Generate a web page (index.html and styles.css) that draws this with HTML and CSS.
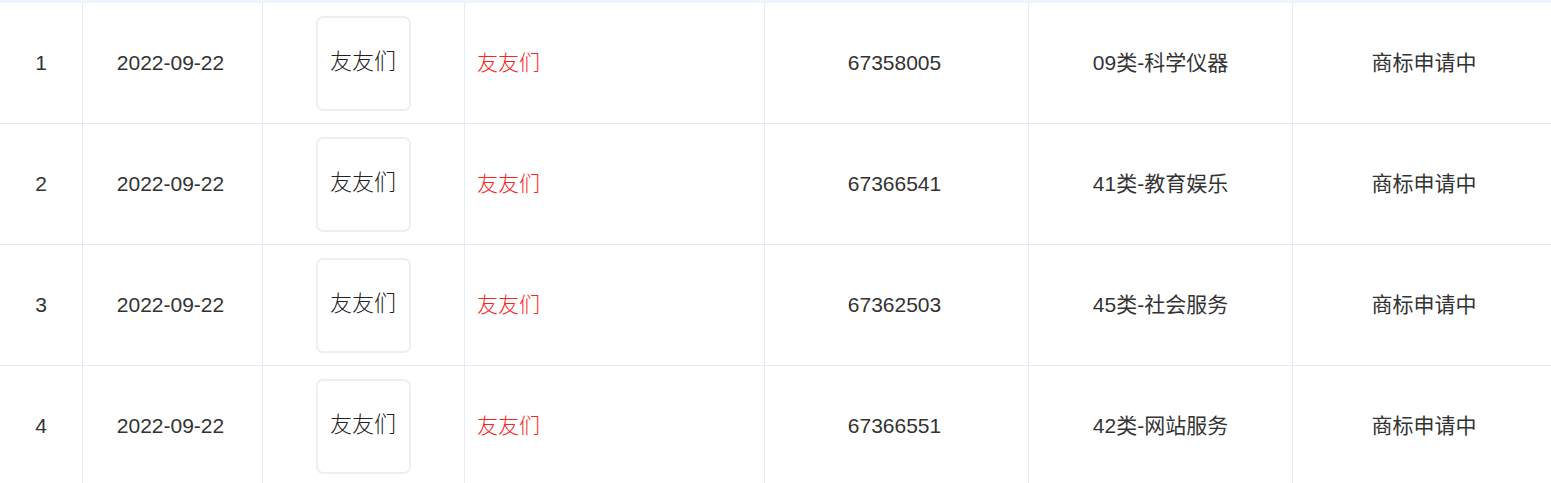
FILE: index.html
```html
<!DOCTYPE html>
<html lang="zh-CN">
<head>
<meta charset="utf-8">
<title>商标列表</title>
<link rel="stylesheet" href="styles.css">
</head>
<body>
<div class="table">
  <div class="row">
    <div class="cell">1</div>
    <div class="cell shift">2022-09-22</div>
    <div class="cell"><div class="logo">友友们</div></div>
    <div class="cell left cjk"><span class="name">友友们</span></div>
    <div class="cell shift">67358005</div>
    <div class="cell cjk">09类-科学仪器</div>
    <div class="cell last cjk">商标申请中</div>
  </div>
  <div class="row">
    <div class="cell">2</div>
    <div class="cell shift">2022-09-22</div>
    <div class="cell"><div class="logo">友友们</div></div>
    <div class="cell left cjk"><span class="name">友友们</span></div>
    <div class="cell shift">67366541</div>
    <div class="cell cjk">41类-教育娱乐</div>
    <div class="cell last cjk">商标申请中</div>
  </div>
  <div class="row">
    <div class="cell">3</div>
    <div class="cell shift">2022-09-22</div>
    <div class="cell"><div class="logo">友友们</div></div>
    <div class="cell left cjk"><span class="name">友友们</span></div>
    <div class="cell shift">67362503</div>
    <div class="cell cjk">45类-社会服务</div>
    <div class="cell last cjk">商标申请中</div>
  </div>
  <div class="row">
    <div class="cell">4</div>
    <div class="cell shift">2022-09-22</div>
    <div class="cell"><div class="logo">友友们</div></div>
    <div class="cell left cjk"><span class="name">友友们</span></div>
    <div class="cell shift">67366551</div>
    <div class="cell cjk">42类-网站服务</div>
    <div class="cell last cjk">商标申请中</div>
  </div>
</div>
</body>
</html>
```

FILE: styles.css
```css
html, body {
  margin: 0;
  padding: 0;
  background: #ffffff;
  overflow: hidden;
}

body {
  font-family: "Liberation Sans", "Noto Sans CJK SC", Arial, sans-serif;
  font-size: 21px;
  color: #333333;
}

.table {
  width: 1551px;
  border-top: 3px solid #eef4fb;
}

.row {
  display: grid;
  grid-template-columns: 83px 180px 202px 300px 264px 264px 258px;
}

.cell {
  box-sizing: border-box;
  height: 121px;
  border-right: 1px solid #e3ecf6;
  border-bottom: 1px solid #e3ecf6;
  display: flex;
  align-items: center;
  justify-content: center;
  white-space: nowrap;
}

.cell.shift {
  padding-right: 4px;
}

.cell.cjk {
  padding-bottom: 5px;
}

.cell.last {
  border-right: none;
  padding-left: 4px;
}

.cell.left {
  justify-content: flex-start;
  padding-left: 12px;
}

.name {
  color: #f7271f;
  font-family: "Noto Sans CJK SC", sans-serif;
  font-weight: 300;
}

.logo {
  box-sizing: border-box;
  width: 95px;
  height: 95px;
  border: 2px solid #efefef;
  border-radius: 7px;
  display: flex;
  align-items: center;
  justify-content: center;
  padding-bottom: 9px;
  padding-right: 1px;
  font-family: "Noto Sans CJK SC", sans-serif;
  font-size: 22px;
  font-weight: 300;
  color: #222222;
}
```
